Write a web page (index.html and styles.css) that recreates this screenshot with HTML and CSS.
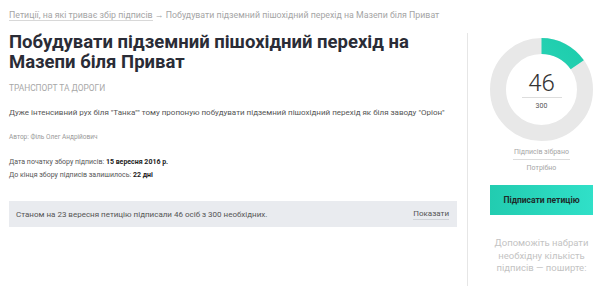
FILE: index.html
```html
<!DOCTYPE html>
<html lang="uk">
<head>
    <meta charset="UTF-8">
    <title>Петиція</title>
    <link rel="stylesheet" href="styles.css">
</head>
<body>
    <div class="page">
        <div class="breadcrumb">
            <a href="#" class="crumb-link">Петиції, на які триває збір підписів</a>
            → Побудувати підземний пішохідний перехід на Мазепи біля Приват
        </div>
        <div class="main">
            <div class="content">
                <h1 class="title">Побудувати підземний пішохідний перехід на Мазепи біля Приват</h1>
                <div class="category">Транспорт та дороги</div>
                <p class="description">Дуже інтенсивний рух біля "Танка"" тому пропоную побудувати підземний пішохідний перехід як біля заводу "Оріон"</p>
                <div class="author">Автор: Філь Олег Андрійович</div>
                <div class="dates">
                    <div>Дата початку збору підписів: <b>15 вересня 2016 р.</b></div>
                    <div>До кінця збору підписів залишилось: <b>22 дні</b></div>
                </div>
                <div class="status">
                    <span>Станом на 23 вересня петицію підписали 46 осіб з 300 необхідних.</span>
                    <a href="#" class="show-link">Показати</a>
                </div>
            </div>
            <div class="side">
                <div class="donut">
                    <svg width="103" height="103" viewBox="0 0 103 103">
                        <defs>
                            <linearGradient id="arc" x1="0" y1="0" x2="1" y2="1">
                                <stop offset="0" stop-color="#3ad9c0"/>
                                <stop offset="1" stop-color="#1ccdac"/>
                            </linearGradient>
                        </defs>
                        <circle cx="51.5" cy="51.5" r="43.5" fill="none" stroke="#e8e8e8" stroke-width="16"/>
                        <circle cx="51.5" cy="51.5" r="43.5" fill="none" stroke="url(#arc)" stroke-width="16"
                                stroke-dasharray="41.9 273.3" transform="rotate(-90 51.5 51.5)"/>
                    </svg>
                    <div class="donut-text">
                        <div class="count">46</div>
                        <div class="need">300</div>
                    </div>
                </div>
                <div class="legend">
                    <div class="legend-top">Підписів зібрано</div>
                    <div>Потрібно</div>
                </div>
                <a href="#" class="sign-btn">Підписати петицію</a>
                <p class="help">Допоможіть набрати<br>необхідну кількість<br>підписів — поширте:</p>
            </div>
        </div>
    </div>
</body>
</html>
```

FILE: styles.css
```css
body {
    margin: 0;
    font-family: Roboto, "Liberation Sans", sans-serif;
    color: #555;
    background: #fff;
    overflow: hidden;
}
a {
    color: inherit;
    text-decoration: none;
}
.page {
    width: 620px;
    padding-left: 9px;
}
.breadcrumb {
    padding-top: 10px;
    font-size: 8.8px;
    line-height: 10px;
    color: #a5a5a5;
}
.crumb-link {
    border-bottom: 1px solid #d8d8d8;
}
.main {
    display: flex;
    margin-top: 13px;
}
.content {
    width: 448px;
}
.title {
    margin: 0;
    font-size: 18.5px;
    line-height: 19.5px;
    font-weight: 700;
    color: #2a2c36;
}
.category {
    margin-top: 11px;
    font-size: 8.4px;
    line-height: 10px;
    text-transform: uppercase;
    color: #a8a8a8;
}
.description {
    margin: 14px 0 0;
    font-size: 8px;
    line-height: 12px;
    color: #555;
}
.author {
    margin-top: 13px;
    font-size: 6.5px;
    line-height: 10px;
    color: #999;
}
.dates {
    margin-top: 14px;
    font-size: 7px;
    line-height: 13px;
    color: #555;
}
.dates b {
    color: #222;
}
.status {
    display: flex;
    justify-content: space-between;
    align-items: center;
    margin-top: 19px;
    height: 26px;
    padding: 0 8px 0 7px;
    background: #e9ebef;
    font-size: 8px;
    color: #555;
}
.show-link {
    border-bottom: 1px solid #cfd2d6;
    line-height: 10px;
}
.side {
    flex: none;
    width: 103px;
    margin-left: 10px;
    padding: 5px 22px 0;
    border-left: 1px solid #e6e6e6;
    min-height: 260px;
}
.donut {
    position: relative;
    width: 103px;
    height: 103px;
}
.donut svg {
    display: block;
}
.donut-text {
    position: absolute;
    left: 0;
    right: 0;
    top: 33px;
    text-align: center;
}
.count {
    width: 40px;
    margin: 0 auto;
    padding-bottom: 2px;
    border-bottom: 1px solid #ddd;
    font-size: 24px;
    line-height: 24px;
    font-weight: 300;
    color: #333;
}
.need {
    margin-top: 3px;
    font-size: 7px;
    line-height: 10px;
    color: #555;
}
.legend {
    margin-top: 6px;
    text-align: center;
    font-size: 7px;
    line-height: 10px;
    color: #a5a5a5;
}
.legend-top {
    width: 57px;
    margin: 0 auto 3px;
    padding-bottom: 2px;
    border-bottom: 1px solid #ddd;
}
.sign-btn {
    display: block;
    margin-top: 12px;
    height: 30px;
    line-height: 30px;
    text-align: center;
    font-size: 8.5px;
    font-weight: 700;
    color: #1d2b2a;
    background: linear-gradient(to right, #22ccb0, #30e0c8);
}
.help {
    margin: 22px -10px 0;
    text-align: center;
    white-space: nowrap;
    font-size: 9.5px;
    line-height: 12.5px;
    color: #c3c3c3;
}
```
